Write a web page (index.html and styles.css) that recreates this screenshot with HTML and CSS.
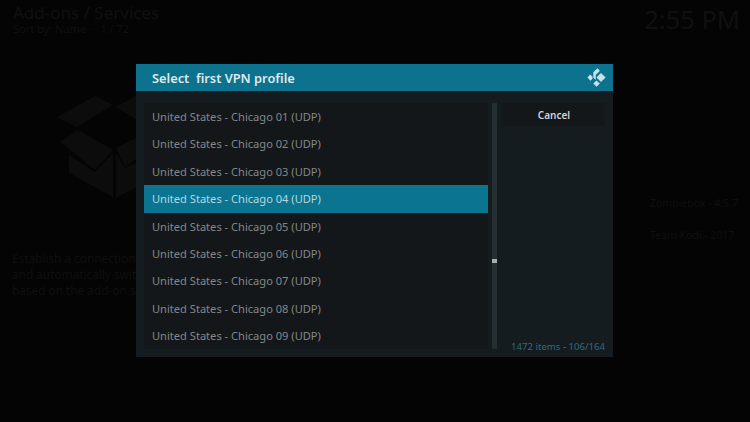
FILE: index.html
```html
<!DOCTYPE html>
<html lang="en">
<head>
<meta charset="utf-8">
<title>Select first VPN profile</title>
<link rel="stylesheet" href="styles.css">
</head>
<body>
<div class="page">
  <header class="top">
    <div>
      <div class="crumb">Add-ons / Services</div>
      <div class="sort">Sort by: Name &nbsp;·&nbsp; 1 / 72</div>
    </div>
    <div class="clock">2:55 PM</div>
  </header>
  <div class="back">
    <div class="addon">
      <svg class="box" viewBox="57 96 100 102" aria-hidden="true">
        <path d="M57 117 95 96 113 105 77 127Z"/>
        <path d="M115 107 136 96H150V125L136 119Z"/>
        <path d="M60 142 78 130 113 150 95 170Z"/>
        <path d="M69 155 95 172 113 153V197L69 173Z"/>
        <path d="M116 148 136 138H150V150L125 167Z"/>
        <path d="M116 153 125 168 150 155V180L116 198Z"/>
      </svg>
      <p class="desc">Establish a connection to<br>and automatically switch<br>based on the add-on se</p>
    </div>
    <div class="meta">
      <div>Zombiebox - 4.5.7</div>
      <div>Team Kodi - 2017</div>
    </div>
  </div>
  <section class="dialog">
    <div class="head">
      <h1>Select&nbsp; first VPN profile</h1>
      <svg class="logo" viewBox="0 0 20 20" aria-hidden="true">
        <path d="M11 0.3 13.6 3 9.2 7.4V12.6L6.6 10V4.6Z"/>
        <path d="M3.4 6.8 5.8 9.2V11.2L3.6 13.4 0.4 10Z"/>
        <path d="M14.6 5.2 19.6 10 14.6 14.8 10 10Z"/>
        <path d="M10 13.2 13.6 16.4 10 19.8 6.6 16.4Z"/>
      </svg>
    </div>
    <div class="body">
      <ul class="list">
        <li>United States - Chicago 01 (UDP)</li>
        <li>United States - Chicago 02 (UDP)</li>
        <li>United States - Chicago 03 (UDP)</li>
        <li class="sel">United States - Chicago 04 (UDP)</li>
        <li>United States - Chicago 05 (UDP)</li>
        <li>United States - Chicago 06 (UDP)</li>
        <li>United States - Chicago 07 (UDP)</li>
        <li>United States - Chicago 08 (UDP)</li>
        <li>United States - Chicago 09 (UDP)</li>
      </ul>
      <div class="track"><span class="thumb"></span></div>
      <div class="side">
        <button class="cancel">Cancel</button>
        <div class="count"><span>1472 items</span> <i>-</i> <span>106/164</span></div>
      </div>
    </div>
  </section>
</div>
</body>
</html>
```
FILE: styles.css
```css
* { box-sizing: border-box; }
html, body { margin: 0; padding: 0; }
body { background: #040404; font-family: "Noto Sans", sans-serif; overflow: hidden; }
.page { position: relative; width: 750px; height: 422px; background: #040404; overflow: hidden; }
.top { display: flex; justify-content: space-between; height: 37px; padding: 2px 10px 0 13px; color: #101010; }
.crumb { font-size: 17px; line-height: 21px; }
.sort { font-size: 11px; line-height: 11px; }
.clock { font-size: 25.5px; line-height: 35px; }
.back { display: flex; justify-content: space-between; padding: 59px 0 0 12px; }
.box { display: block; width: 100px; height: 102px; margin-left: 45px; fill: #0c0c0c; }
.desc { margin: 52px 0 0; font-size: 11.8px; line-height: 16.2px; color: #0f0f0f; white-space: nowrap; }
.meta { width: 100px; margin-top: 91px; font-size: 10.5px; line-height: 32px; color: #0f0f0f; white-space: nowrap; }
.dialog { position: absolute; left: 136px; top: 64px; width: 477px; height: 293px; background: #141c20; display: flex; flex-direction: column; }
.head { flex: none; height: 27px; background: #0c728d; display: flex; align-items: center; justify-content: space-between; padding: 0 7px 0 16px; }
.head h1 { margin: 0; font-size: 12.8px; font-weight: 600; color: #dfe9ec; }
.logo { width: 19px; height: 19px; fill: #c4e2ea; }
.body { flex: 1; display: flex; padding: 12px 8px 8px; }
.list { list-style: none; margin: 0; padding: 0; width: 344px; background: #13171a; height: 246px; }
.list li { height: 27.4px; line-height: 27.4px; padding-left: 8px; font-size: 11.1px; color: #838789; white-space: nowrap; }
.list li.sel { background: #0b7591; color: #b7d6df; }
.track { position: relative; flex: none; width: 5px; height: 246px; margin-left: 4px; background: #252e31; }
.thumb { position: absolute; left: 0; top: 156px; width: 5px; height: 4px; background: #a9adae; }
.side { flex: 1; margin-left: 6px; display: flex; flex-direction: column; justify-content: space-between; }
.cancel { display: block; width: 100%; height: 23px; padding: 0; border: 0; background: #13171a; color: #d0d2d3; font: 600 10px "Noto Sans", sans-serif; }
.count { text-align: right; font-size: 9.6px; line-height: 13px; color: #6d777b; margin-bottom: -4px; white-space: nowrap; }
.count span { color: #35697d; }
.count i { font-style: normal; }
```
